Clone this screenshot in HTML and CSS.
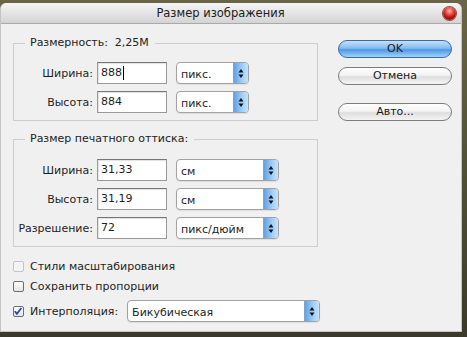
FILE: index.html
```html
<!DOCTYPE html>
<html lang="ru">
    <head>
        <meta charset="UTF-8">
        <title>Размер изображения</title>
        <link rel="stylesheet" href="styles.css">
    </head>
    <body>
        <div class="window">
            <div class="title_bar">
                <span class="title_text">Размер изображения</span>
                <span class="close_button"></span>
            </div>
            <div class="window_body">
                <div class="left_column">
                    <fieldset class="group">
                        <legend class="group_legend">Размерность:&nbsp; 2,25M</legend>
                        <div class="field_row">
                            <span class="field_label">Ширина:</span>
                            <div class="text_input">888<span class="caret"></span></div>
                            <div class="popup popup_short">
                                <span class="popup_value">пикс.</span>
                                <span class="popup_stepper"><svg width="6" height="11" viewBox="0 0 6 11"><path d="M3 1 L5.5 4.5 L0.5 4.5 Z M3 10 L5.5 6.5 L0.5 6.5 Z" fill="#111"/></svg></span>
                            </div>
                        </div>
                        <div class="field_row">
                            <span class="field_label">Высота:</span>
                            <div class="text_input">884</div>
                            <div class="popup popup_short">
                                <span class="popup_value">пикс.</span>
                                <span class="popup_stepper"><svg width="6" height="11" viewBox="0 0 6 11"><path d="M3 1 L5.5 4.5 L0.5 4.5 Z M3 10 L5.5 6.5 L0.5 6.5 Z" fill="#111"/></svg></span>
                            </div>
                        </div>
                    </fieldset>

                    <fieldset class="group group_print">
                        <legend class="group_legend">Размер печатного оттиска:</legend>
                        <div class="field_row">
                            <span class="field_label">Ширина:</span>
                            <div class="text_input">31,33</div>
                            <div class="popup popup_long">
                                <span class="popup_value">см</span>
                                <span class="popup_stepper"><svg width="6" height="11" viewBox="0 0 6 11"><path d="M3 1 L5.5 4.5 L0.5 4.5 Z M3 10 L5.5 6.5 L0.5 6.5 Z" fill="#111"/></svg></span>
                            </div>
                        </div>
                        <div class="field_row">
                            <span class="field_label">Высота:</span>
                            <div class="text_input">31,19</div>
                            <div class="popup popup_long">
                                <span class="popup_value">см</span>
                                <span class="popup_stepper"><svg width="6" height="11" viewBox="0 0 6 11"><path d="M3 1 L5.5 4.5 L0.5 4.5 Z M3 10 L5.5 6.5 L0.5 6.5 Z" fill="#111"/></svg></span>
                            </div>
                        </div>
                        <div class="field_row">
                            <span class="field_label">Разрешение:</span>
                            <div class="text_input">72</div>
                            <div class="popup popup_long">
                                <span class="popup_value">пикс/дюйм</span>
                                <span class="popup_stepper"><svg width="6" height="11" viewBox="0 0 6 11"><path d="M3 1 L5.5 4.5 L0.5 4.5 Z M3 10 L5.5 6.5 L0.5 6.5 Z" fill="#111"/></svg></span>
                            </div>
                        </div>
                    </fieldset>

                    <div class="check_row">
                        <span class="check_box check_disabled"></span>
                        <span class="check_label">Стили масштабирования</span>
                    </div>
                    <div class="check_row">
                        <span class="check_box"></span>
                        <span class="check_label">Сохранить пропорции</span>
                    </div>
                    <div class="check_row interp_row">
                        <span class="check_box check_on"><svg width="11" height="11" viewBox="0 0 11 11"><path d="M2 5.2 L4.3 8 L9.2 1.6" fill="none" stroke="#1d4fa8" stroke-width="2"/></svg></span>
                        <span class="check_label">Интерполяция:</span>
                        <div class="popup popup_wide">
                            <span class="popup_value">Бикубическая</span>
                            <span class="popup_stepper"><svg width="6" height="11" viewBox="0 0 6 11"><path d="M3 1 L5.5 4.5 L0.5 4.5 Z M3 10 L5.5 6.5 L0.5 6.5 Z" fill="#111"/></svg></span>
                        </div>
                    </div>
                </div>

                <div class="right_column">
                    <div class="pill_button pill_default">OK</div>
                    <div class="pill_button">Отмена</div>
                    <div class="pill_button pill_auto">Авто...</div>
                </div>
            </div>
        </div>
    </body>
</html>
```

FILE: styles.css
```css
body {
    width:      467px;
    height:     337px;
    margin:     0px;
    padding:    3px 0px 0px 0px;
    box-sizing: border-box;
    overflow:   hidden;
    background: linear-gradient(#6b6548, #55553a 40%, #3b3a2a);
    font-family: "DejaVu Sans", sans-serif;
    font-size:  11px;
    color:      #1e1e1e;
}

.window {
    width: 462px;   height: 329px;
    box-sizing: border-box;
    background: #f0f0f0;
    border: solid 1px #c4c4c4;
    border-top: none;
    border-radius: 6px 6px 0px 0px;
    display: flex;
    flex-direction: column;
}

/* title */
.title_bar {
    height: 20px;
    display: flex;
    align-items: center;
    background: linear-gradient(#f6f6f6, #e2e2e2 55%, #d4d4d4);
    border-bottom: solid 1px #a9a9a9;
    border-radius: 6px 6px 0px 0px;
}
.title_text {
    flex: 1;
    text-align: center;
    font-size: 11.5px;
    color: #202020;
}
.close_button {
    width: 13px;    height: 13px;
    margin: 0px 5px 0px 3px;
    border-radius: 50%;
    background: radial-gradient(circle at 50% 30%, #ffb9b3 0px, #e8453b 4px, #a8130e 7px);
    box-shadow: 0px 0px 0px 1px #8f4a44;
}

/* body */
.window_body {
    flex: 1;
    display: flex;
    padding: 12px 0px 0px 12px;
}
.left_column {
    width: 307px;
    display: flex;
    flex-direction: column;
}

.group {
    width: 305px;
    box-sizing: border-box;
    margin: 0px;
    padding: 12px 0px 7px 0px;
    border: solid 1px #cdcdcd;
    display: flex;
    flex-direction: column;
    gap: 7px;
}
.group_print { margin-top: 11px; padding-top: 13px; }

.group_legend {
    margin-left: 11px;
    padding: 0px 6px 0px 5px;
    line-height: 14px;
    color: #222222;
}

.field_row {
    display: flex;
    align-items: center;
    height: 22px;
}
.field_label {
    width: 79px;
    margin-right: 4px;
    text-align: right;
}

.text_input {
    width: 70px;    height: 22px;
    box-sizing: border-box;
    margin-right: 9px;
    padding-left: 3px;
    line-height: 20px;
    background: #ffffff;
    border: solid 1px #9a9a9a;
    border-top-color: #767676;
    box-shadow: inset 1px 1px 1px #e2e2e2;
    display: flex;
    align-items: center;
}
.caret {
    width: 1px;     height: 14px;
    margin-left: 1px;
    background: #000000;
}

/* popup menu */
.popup {
    height: 22px;
    box-sizing: border-box;
    display: flex;
    background: #ffffff;
    border: solid 1px #a2a2a2;
    border-radius: 4px;
    box-shadow: 0px 1px 1px rgba(0, 0, 0, 0.08);
}
.popup_short { width: 73px; }
.popup_long  { width: 103px; }
.popup_wide  { width: 193px; margin-left: 9px; }

.popup_value {
    flex: 1;
    padding: 3px 0px 0px 4px;
    line-height: 18px;
}
.popup_stepper {
    width: 14px;
    display: flex;
    align-items: center;
    justify-content: center;
    background: linear-gradient(90deg, #5fa2e4, #a4cff7 60%, #c5e2fb);
    border-left: solid 1px #7fa6d3;
    border-radius: 0px 3px 3px 0px;
}

/* checkboxes */
.check_row {
    display: flex;
    align-items: center;
    height: 20px;
}
.check_row:first-of-type { margin-top: 9px; }
.interp_row { height: 22px; margin-top: 4px; }

.check_box {
    width: 11px;    height: 11px;
    box-sizing: border-box;
    margin-right: 6px;
    border: solid 1px #6e6e6e;
    border-radius: 2px;
    background: linear-gradient(#ffffff, #e4e4e4);
    display: flex;
}
.check_disabled { border-color: #c4c4c4; background: #f4f4f4; }
.check_on svg { margin: -1px 0px 0px -1px; }

/* buttons */
.right_column {
    margin: 4px 0px 0px 18px;
    display: flex;
    flex-direction: column;
    gap: 9px;
}
.pill_button {
    width: 114px;   height: 18px;
    box-sizing: border-box;
    border: solid 1px #7c7c7c;
    border-radius: 9px;
    background: linear-gradient(#ffffff, #f3f3f3 45%, #dedede 55%, #f4f4f4);
    text-align: center;
    line-height: 16px;
    color: #1a1a1a;
}
.pill_default {
    border-color: #3b6aa6;
    background: linear-gradient(#c4e0fb, #84bbf1 45%, #4f98e4 55%, #a2d3fc);
}
.pill_auto { margin-top: 9px; }
```
